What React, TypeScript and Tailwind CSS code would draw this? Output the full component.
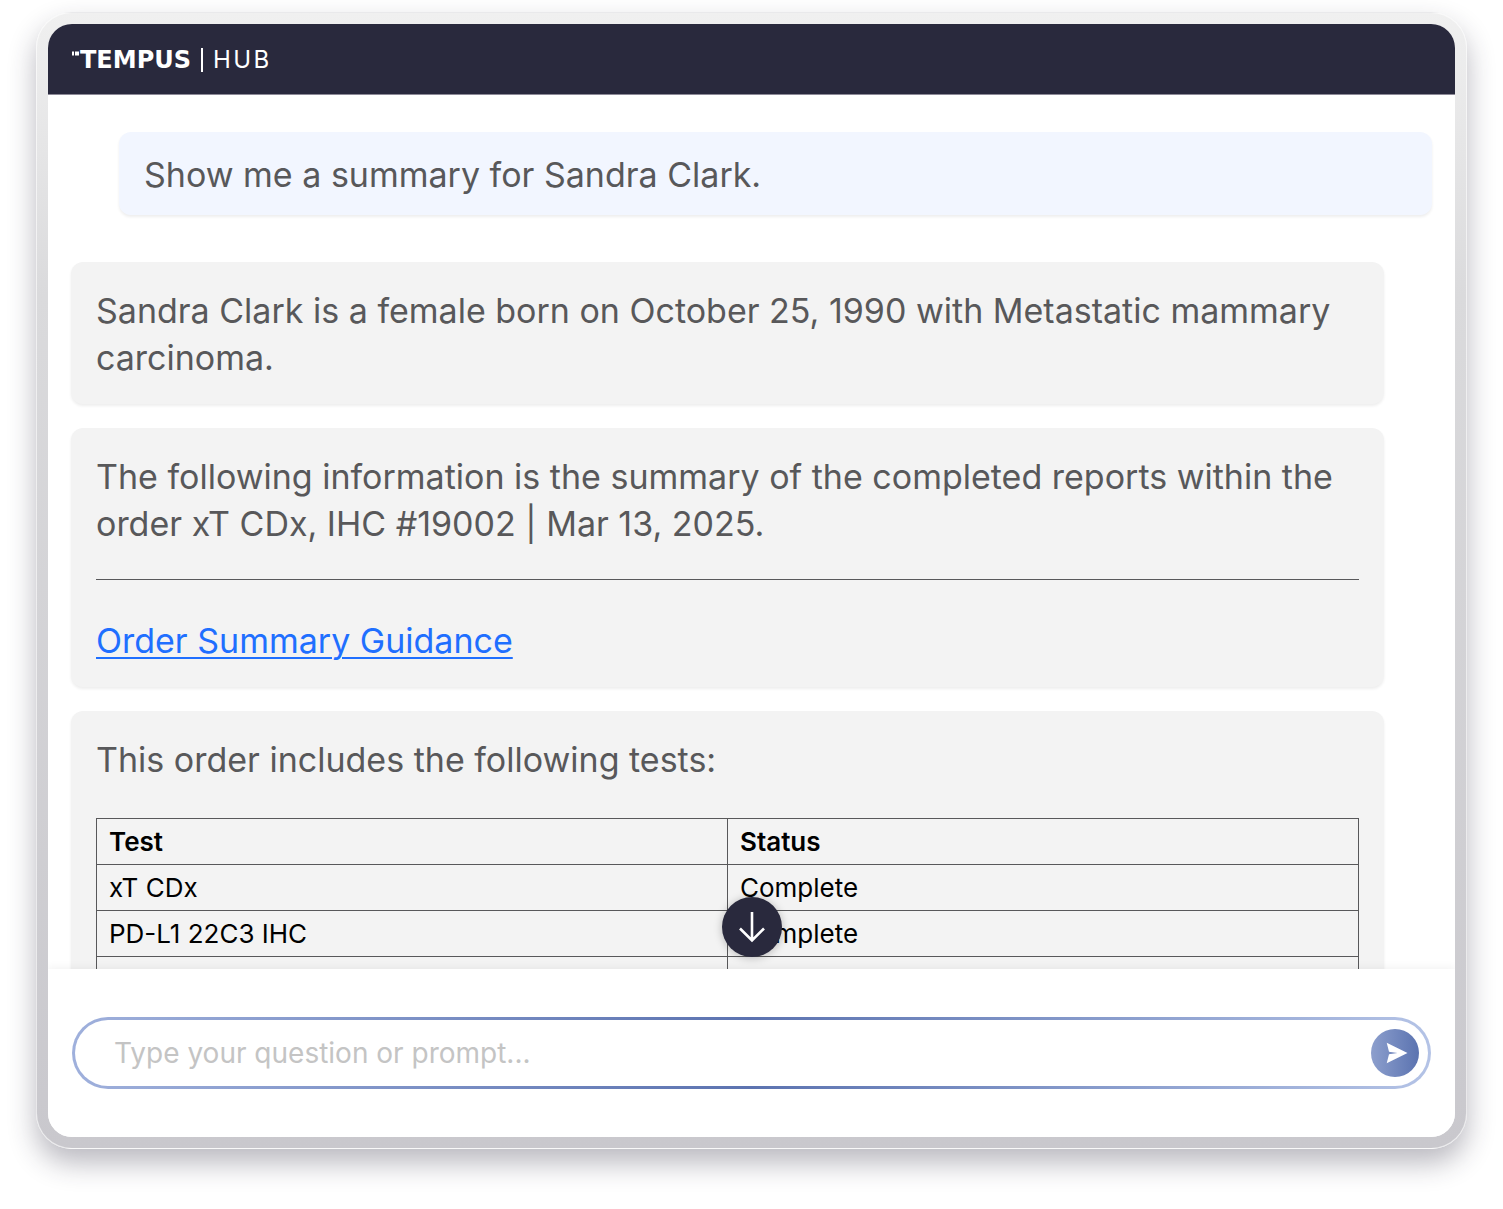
import { useState } from "react";
import type { ReactNode } from "react";

interface TestRow {
  id: string;
  test: string;
  status: string;
}

const tests: TestRow[] = [
  { id: "xt-cdx", test: "xT CDx", status: "Complete" },
  { id: "pd-l1", test: "PD-L1 22C3 IHC", status: "Complete" },
  { id: "next", test: "", status: "" },
];

function Logo() {
  return (
    <div className="flex items-center text-white">
      <svg className="h-[18px] w-[8px]" viewBox="0 0 8 18" fill="currentColor" aria-hidden="true">
        <rect x="0" y="0.5" width="2" height="4" />
        <rect x="3" y="0.5" width="4" height="4" />
      </svg>
      <span className="font-['DejaVu_Sans',sans-serif] text-2xl leading-6 font-bold">TEMPUS</span>
      <span className="mx-2.5 h-6 w-0.5 bg-white"></span>
      <span className="text-2xl leading-6 tracking-widest">HUB</span>
    </div>
  );
}

function UserMessage({ children }: { children: ReactNode }) {
  return (
    <div className="mb-[47px] ml-12 rounded-xl bg-[#f2f6ff] px-[25px] pt-[19px] pb-[17px] shadow-[0_2px_3px_rgba(0,0,0,0.07)]">
      {children}
    </div>
  );
}

function ReplyMessage({ children }: { children: ReactNode }) {
  return (
    <div className="mr-12 mb-6 rounded-xl bg-[#f3f3f3] px-[25px] pt-[25px] pb-[23px] shadow-[0_2px_3px_rgba(0,0,0,0.07)]">
      {children}
    </div>
  );
}

export default function App() {
  const [prompt, setPrompt] = useState("");

  return (
    <div className="flex h-screen flex-col bg-white px-9 pt-3 pb-[60px] font-['Inter',sans-serif]">
      <div className="flex min-h-0 flex-1 flex-col rounded-[36px] border border-white/60 bg-linear-to-b from-[#f0f0f0] via-[#dadadc] via-25% to-[#c9c8cd] p-[11px] shadow-[0_14px_28px_rgba(40,38,60,0.32)]">
        <div className="flex min-h-0 flex-1 flex-col overflow-hidden rounded-3xl bg-white">
          <header className="flex h-[71px] shrink-0 items-center border-b border-[#8d8a98] bg-[#29293d] px-6 pt-0.5">
            <Logo />
          </header>

          <main className="relative min-h-0 flex-1">
            <div className="h-full overflow-y-auto px-[23px] pt-[37px] text-[34px] leading-[47px] text-[#58585a] [scrollbar-width:none]">
              <UserMessage>
                <p>Show me a summary for Sandra Clark.</p>
              </UserMessage>

              <ReplyMessage>
                <p>Sandra Clark is a female born on October 25, 1990 with Metastatic mammary carcinoma.</p>
              </ReplyMessage>

              <ReplyMessage>
                <p>
                  The following information is the summary of the completed reports within the order xT CDx, IHC #19002
                  | Mar 13, 2025.
                </p>
                <hr className="mt-8 mb-[37px] border-[#58585a]" />
                <a href="#guidance" className="block text-[#1f6fff] underline decoration-2 underline-offset-4">
                  Order Summary Guidance
                </a>
              </ReplyMessage>

              <ReplyMessage>
                <p>This order includes the following tests:</p>
                <table className="mt-[35px] w-full table-fixed border-collapse text-left text-[26px] leading-8 text-black">
                  <thead>
                    <tr className="h-[46px]">
                      <th className="border border-[#58585a] px-3 font-semibold">Test</th>
                      <th className="border border-[#58585a] px-3 font-semibold">Status</th>
                    </tr>
                  </thead>
                  <tbody>
                    {tests.map((row) => (
                      <tr key={row.id} className="h-[46px]">
                        <td className="border border-[#58585a] px-3">{row.test}</td>
                        <td className="border border-[#58585a] px-3">{row.status}</td>
                      </tr>
                    ))}
                  </tbody>
                </table>
              </ReplyMessage>
            </div>

            {/* Scroll to latest */}
            <button
              type="button"
              aria-label="Scroll down"
              className="absolute bottom-3 left-1/2 flex size-[60px] -translate-x-1/2 items-center justify-center rounded-full bg-[#29293d] text-white shadow-[0_1px_8px_rgba(0,0,0,0.25)]"
            >
              <svg className="size-9" viewBox="0 0 36 36" fill="none" stroke="currentColor" strokeWidth="2.6" aria-hidden="true">
                <path d="M18 3v28M6 19.5l12 12 12-12" />
              </svg>
            </button>
          </main>

          <footer className="relative shrink-0 bg-white px-6 py-12 shadow-[0_-2px_8px_rgba(0,0,0,0.05)]">
            <form
              className="rounded-full bg-linear-to-r from-[#9fb0dc] via-[#5c73b0] to-[#b4c3e6] p-[3px]"
              onSubmit={(e) => e.preventDefault()}
            >
              <div className="flex h-[66px] items-center rounded-full bg-white pr-[9px] pl-[39px]">
                <input
                  type="text"
                  aria-label="Question or prompt"
                  value={prompt}
                  onChange={(e) => setPrompt(e.target.value)}
                  placeholder="Type your question or prompt..."
                  className="min-w-0 flex-1 bg-transparent text-[28px] text-[#58585a] outline-none placeholder:text-[#c4c4c4]"
                />
                <button
                  type="submit"
                  aria-label="Send"
                  className="flex size-12 items-center justify-center rounded-full bg-linear-to-r from-[#8d9fcd] to-[#5b73b0] text-white"
                >
                  <svg className="size-12" viewBox="0 0 48 48" fill="currentColor" aria-hidden="true">
                    <path d="M15.7 13.8 36.5 24 15.7 34.3 18 25.2 26.5 24 18 22.8Z" />
                  </svg>
                </button>
              </div>
            </form>
          </footer>
        </div>
      </div>
    </div>
  );
}
